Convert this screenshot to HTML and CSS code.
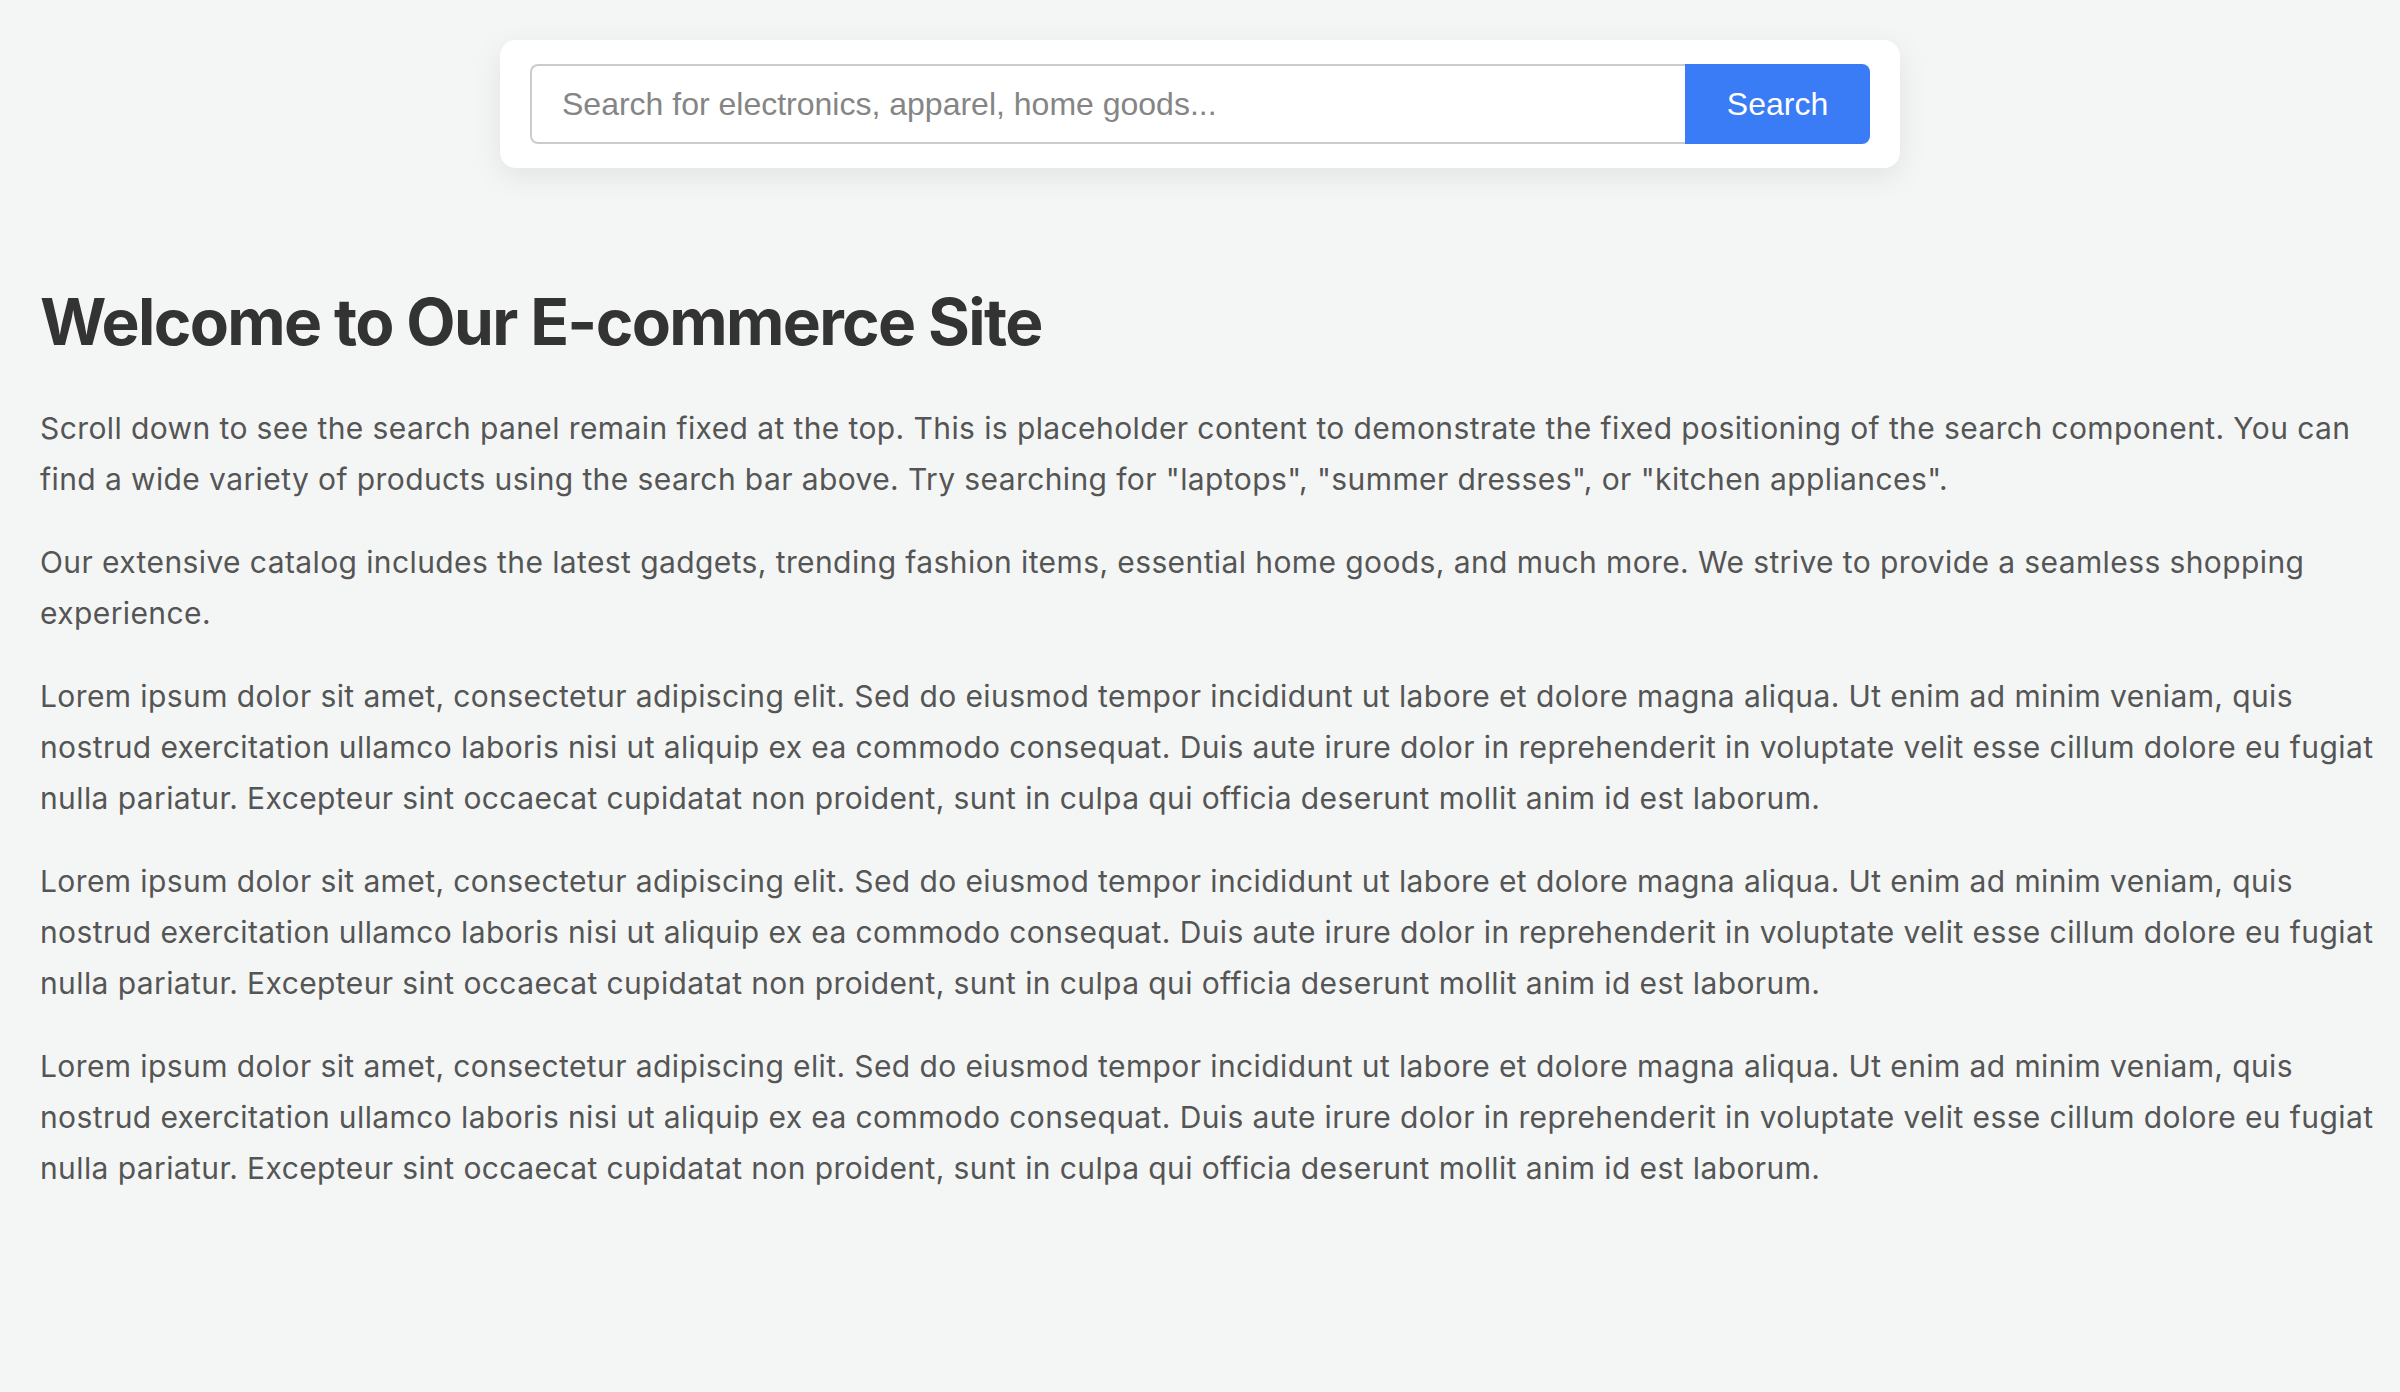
FILE: index.html
```html
<!DOCTYPE html>
<html lang="en">
<head>
<meta charset="utf-8">
<title>E-commerce Site</title>
<link rel="stylesheet" href="styles.css">
</head>
<body>
<header class="top">
  <form class="search-panel">
    <input class="search-input" type="text" placeholder="Search for electronics, apparel, home goods...">
    <button class="search-btn" type="button">Search</button>
  </form>
</header>
<main class="content">
  <h1 class="title">Welcome to Our E-commerce Site</h1>
  <p class="para">Scroll down to see the search panel remain fixed at the top. This is placeholder content to demonstrate the fixed positioning of the search component. You can find a wide variety of products using the search bar above. Try searching for "laptops", "summer dresses", or "kitchen appliances".</p>
  <p class="para">Our extensive catalog includes the latest gadgets, trending fashion items, essential home goods, and much more. We strive to provide a seamless shopping experience.</p>
  <p class="para">Lorem ipsum dolor sit amet, consectetur adipiscing elit. Sed do eiusmod tempor incididunt ut labore et dolore magna aliqua. Ut enim ad minim veniam, quis nostrud exercitation ullamco laboris nisi ut aliquip ex ea commodo consequat. Duis aute irure dolor in reprehenderit in voluptate velit esse cillum dolore eu fugiat nulla pariatur. Excepteur sint occaecat cupidatat non proident, sunt in culpa qui officia deserunt mollit anim id est laborum.</p>
  <p class="para">Lorem ipsum dolor sit amet, consectetur adipiscing elit. Sed do eiusmod tempor incididunt ut labore et dolore magna aliqua. Ut enim ad minim veniam, quis nostrud exercitation ullamco laboris nisi ut aliquip ex ea commodo consequat. Duis aute irure dolor in reprehenderit in voluptate velit esse cillum dolore eu fugiat nulla pariatur. Excepteur sint occaecat cupidatat non proident, sunt in culpa qui officia deserunt mollit anim id est laborum.</p>
  <p class="para">Lorem ipsum dolor sit amet, consectetur adipiscing elit. Sed do eiusmod tempor incididunt ut labore et dolore magna aliqua. Ut enim ad minim veniam, quis nostrud exercitation ullamco laboris nisi ut aliquip ex ea commodo consequat. Duis aute irure dolor in reprehenderit in voluptate velit esse cillum dolore eu fugiat nulla pariatur. Excepteur sint occaecat cupidatat non proident, sunt in culpa qui officia deserunt mollit anim id est laborum.</p>
</main>
</body>
</html>
```

FILE: styles.css
```css
* { box-sizing: border-box; }

body {
  margin: 0;
  background: #f4f6f5;
  font-family: Inter, "Noto Sans", sans-serif;
  color: #555555;
}

.top {
  padding-top: 40px;
  display: flex;
  justify-content: center;
}

.search-panel {
  width: 1400px;
  height: 128px;
  margin: 0;
  padding: 24px 30px;
  background: #ffffff;
  border-radius: 16px;
  box-shadow: 0 8px 30px rgba(0, 0, 0, 0.08);
  display: flex;
}

.search-input {
  flex: 1;
  min-width: 0;
  height: 80px;
  margin: 0;
  padding: 0 30px;
  border: 2px solid #cccccc;
  border-right: none;
  border-radius: 8px 0 0 8px;
  font-family: "Liberation Sans", Arial, sans-serif;
  font-size: 32px;
  color: #333333;
  background: #ffffff;
  outline: none;
}

.search-input::placeholder { color: #858585; }

.search-btn {
  height: 80px;
  width: 185px;
  margin: 0;
  padding: 0;
  border: none;
  border-radius: 0 8px 8px 0;
  background: #3a7bf6;
  color: #ffffff;
  font-family: "Liberation Sans", Arial, sans-serif;
  font-size: 32px;
}

.content {
  padding: 115px 16px 40px 40px;
}

.title {
  margin: 0 0 43px;
  font-size: 64px;
  line-height: 77px;
  font-weight: 700;
  color: #333333;
  letter-spacing: -1.65px;
}

.para {
  margin: 0 0 32px;
  font-size: 30px;
  line-height: 51px;
  letter-spacing: 0.4px;
}
```
